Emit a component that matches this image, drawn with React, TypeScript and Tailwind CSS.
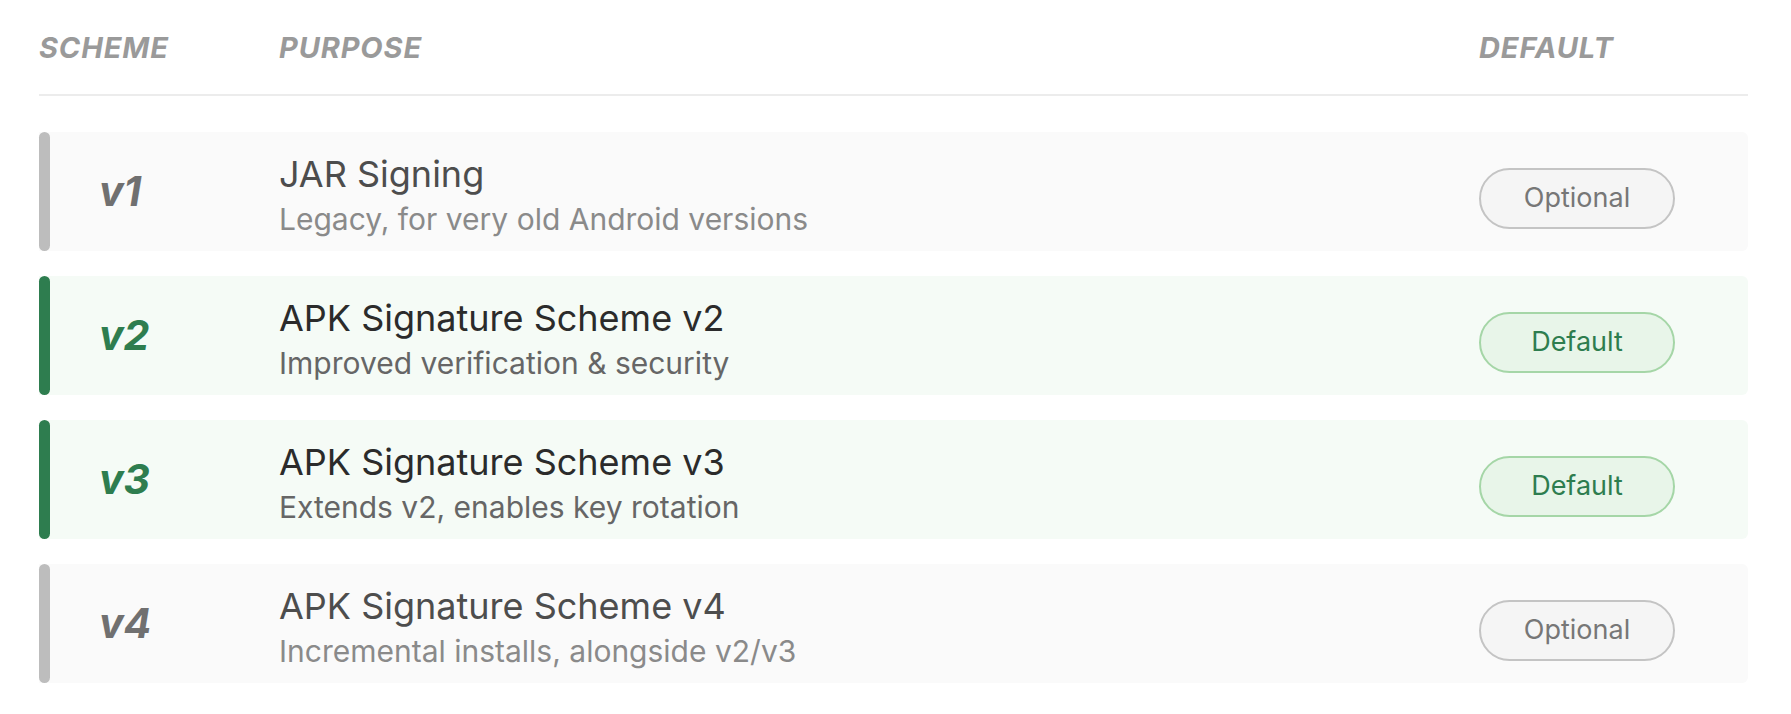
import React from "react";

type Row = {
  v: string;
  title: string;
  desc: string;
  isDefault: boolean;
};

const rows: Row[] = [
  { v: "v1", title: "JAR Signing", desc: "Legacy, for very old Android versions", isDefault: false },
  { v: "v2", title: "APK Signature Scheme v2", desc: "Improved verification & security", isDefault: true },
  { v: "v3", title: "APK Signature Scheme v3", desc: "Extends v2, enables key rotation", isDefault: true },
  { v: "v4", title: "APK Signature Scheme v4", desc: "Incremental installs, alongside v2/v3", isDefault: false },
];

function SchemeRow({ r }: { r: Row }) {
  const green = r.isDefault;
  return (
    <div className={green ? "flex h-[119px] rounded-r-[6px] bg-[#f5fbf6]" : "flex h-[119px] rounded-r-[6px] bg-[#fafafa]"}>
      <div className={green ? "w-[11px] shrink-0 rounded-[6px] bg-[#2e7d4f]" : "w-[11px] shrink-0 rounded-[6px] bg-[#bdbdbd]"} />
      <div className="grid flex-1 grid-cols-[229px_1fr_269px] items-center">
        <div className="pl-[49px]">
          <span
            className={
              green
                ? "text-[41px] font-bold italic leading-none text-[#2e7d4f]"
                : "text-[41px] font-bold italic leading-none text-[#707070]"
            }
          >
            {r.v}
          </span>
        </div>
        <div className="flex flex-col pt-[8px]">
          <div className={green ? "text-[36px] leading-[46px] text-[#2b2b2b]" : "text-[36px] leading-[46px] text-[#4d4d4d]"}>
            {r.title}
          </div>
          <div className={green ? "text-[30px] leading-[44px] text-[#666666]" : "text-[30px] leading-[44px] text-[#8a8a8a]"}>
            {r.desc}
          </div>
        </div>
        <div className="pt-[14px]">
          <div
            className={
              green
                ? "flex h-[61px] w-[196px] items-center justify-center rounded-full border-[2.5px] border-[#a5d6a7] bg-[#e8f5e9] text-[27px] text-[#2e7d4f]"
                : "flex h-[61px] w-[196px] items-center justify-center rounded-full border-[2.5px] border-[#c4c4c4] bg-[#f5f5f5] text-[27px] text-[#777777]"
            }
          >
            {r.isDefault ? "Default" : "Optional"}
          </div>
        </div>
      </div>
    </div>
  );
}

export default function App() {
  return (
    <div className="h-[714px] w-[1791px] bg-white pl-[39px] pr-[43px] pt-[26px] font-['Inter','Noto_Sans',sans-serif]">
      <div className="grid h-[70px] grid-cols-[240px_1fr_269px] items-start border-b-[2px] border-[#ececec] text-[29px] font-bold italic uppercase tracking-[0.03em] text-[#9a9a9a]">
        <div>Scheme</div>
        <div>Purpose</div>
        <div>Default</div>
      </div>
      <div className="mt-[36px] flex flex-col gap-[25px]">
        {rows.map((r) => (
          <SchemeRow key={r.v} r={r} />
        ))}
      </div>
    </div>
  );
}
